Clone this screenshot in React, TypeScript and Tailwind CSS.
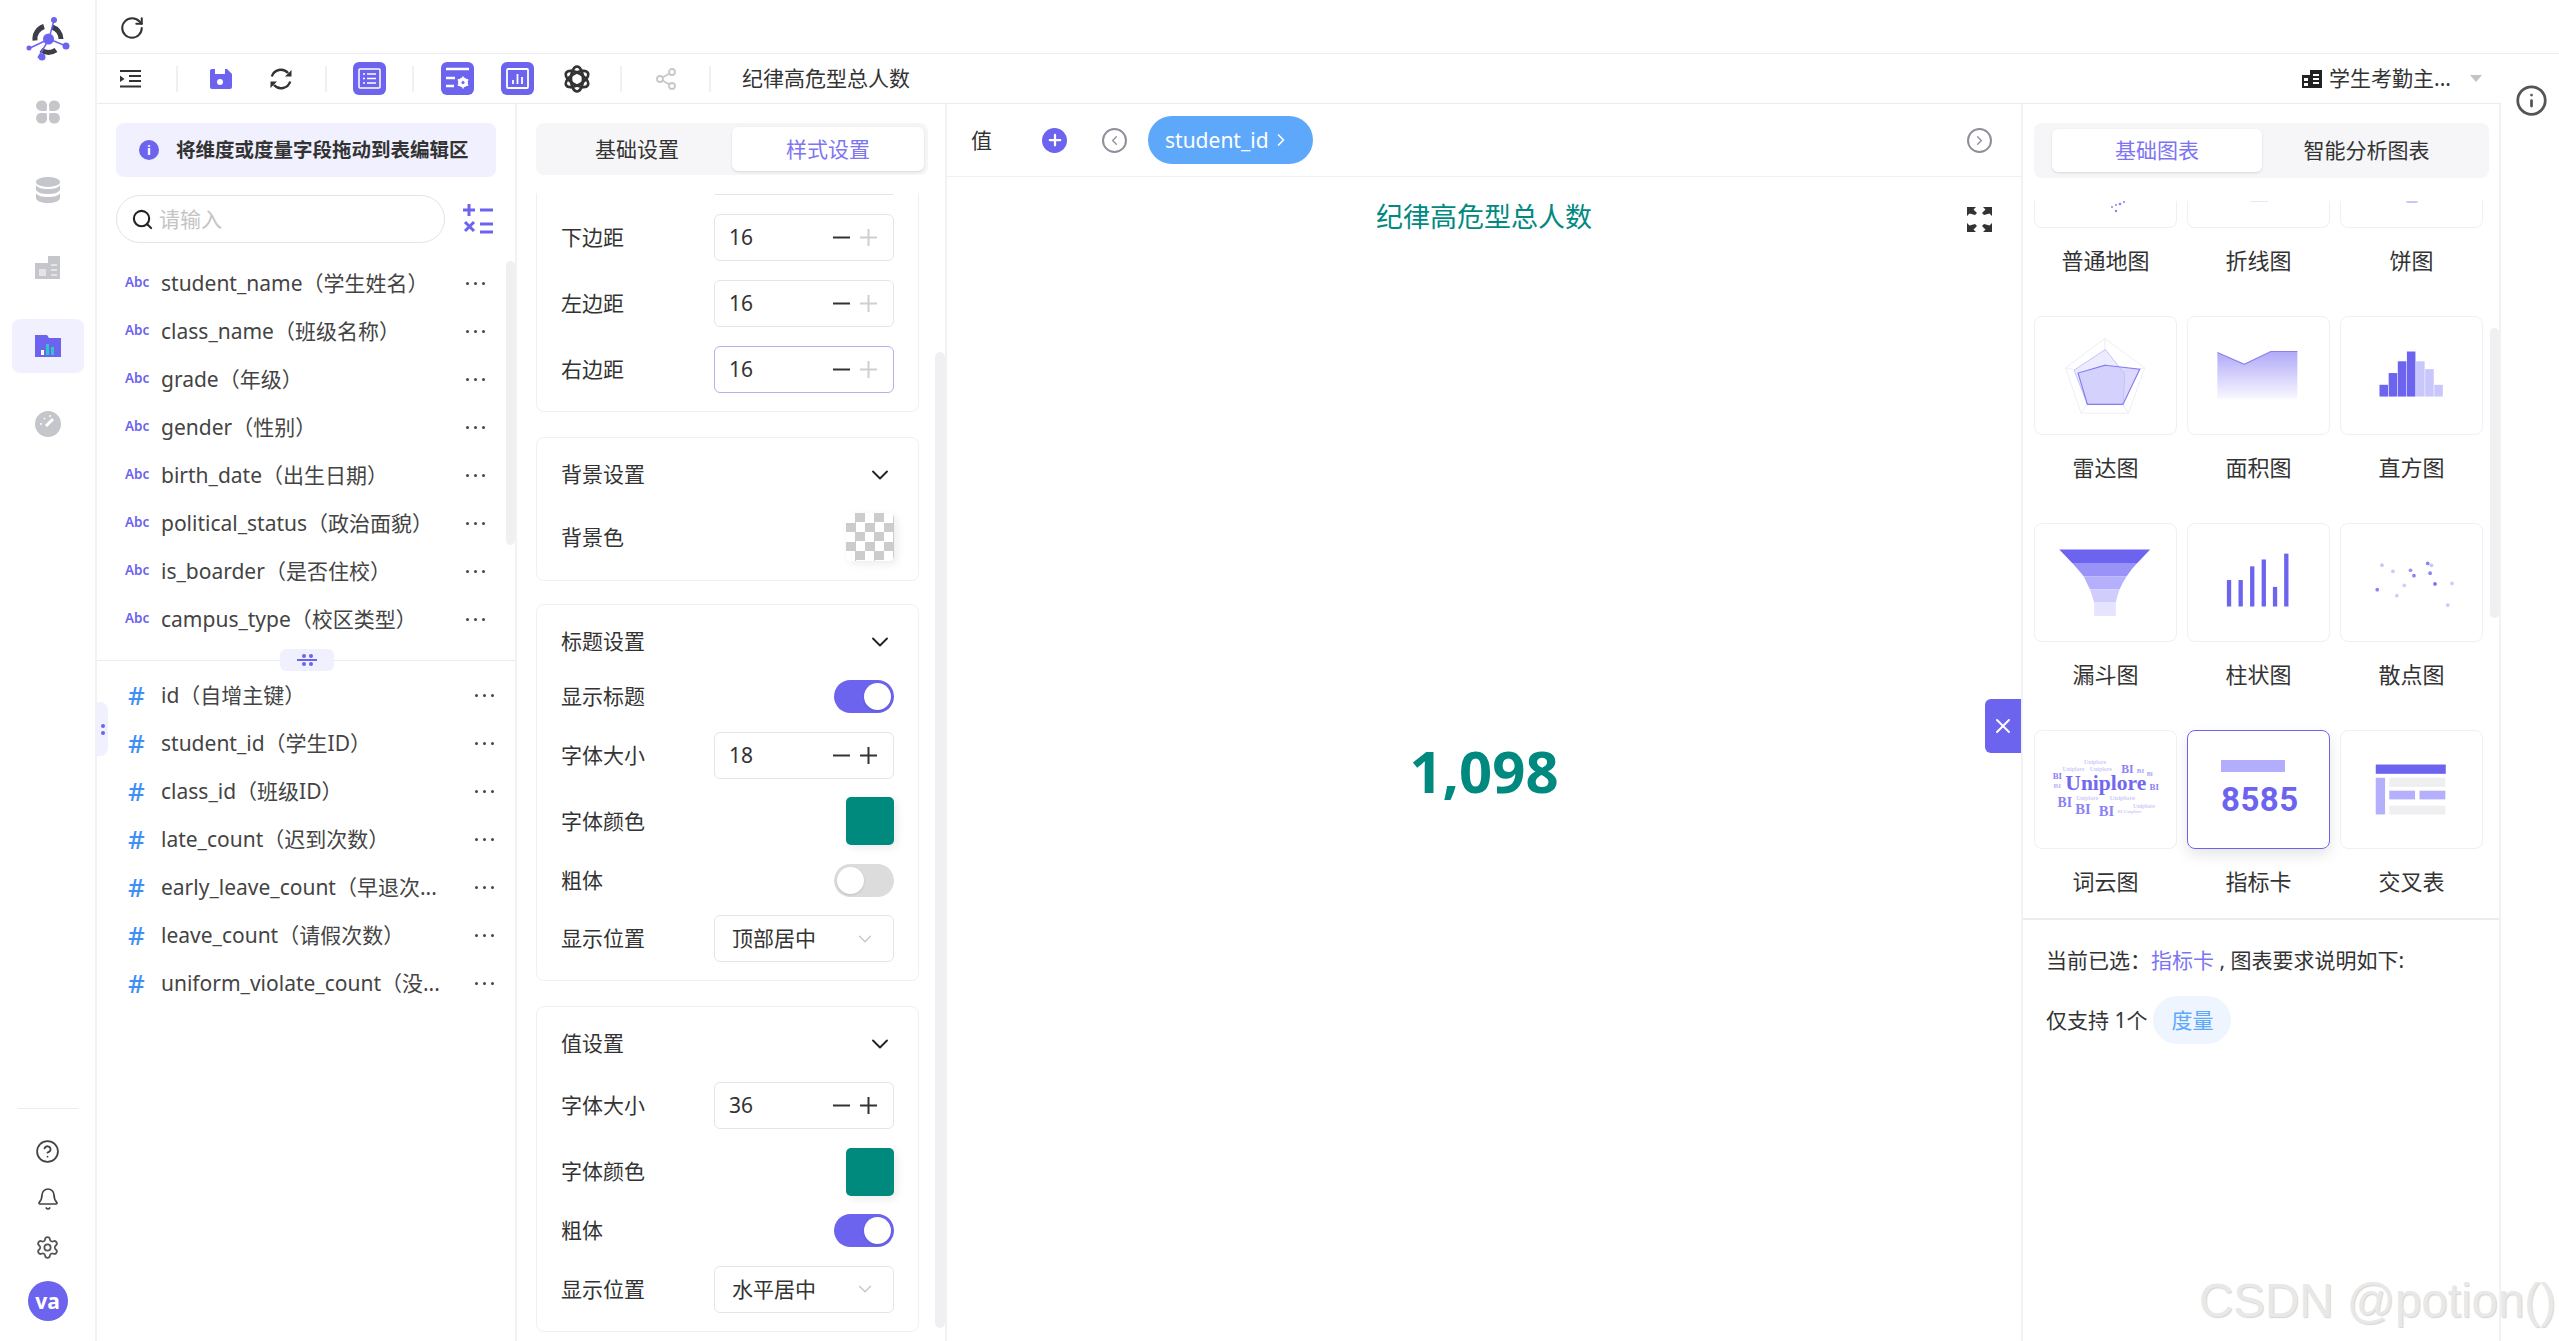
import { Bell, ChevronDown, ChevronLeft, ChevronRight, CircleHelp, Info, Plus, RotateCw, Search, Settings, Share2, X } from "lucide-react";

const dims = [
  "student_name（学生姓名）",
  "class_name（班级名称）",
  "grade（年级）",
  "gender（性别）",
  "birth_date（出生日期）",
  "political_status（政治面貌）",
  "is_boarder（是否住校）",
  "campus_type（校区类型）",
];

const measures = [
  "id（自增主键）",
  "student_id（学生ID）",
  "class_id（班级ID）",
  "late_count（迟到次数）",
  "early_leave_count（早退次...",
  "leave_count（请假次数）",
  "uniform_violate_count（没...",
];

function Dots() {
  return (
    <span className="flex items-center gap-[5px]">
      <span className="size-[3px] rounded-full bg-[#444]" />
      <span className="size-[3px] rounded-full bg-[#444]" />
      <span className="size-[3px] rounded-full bg-[#444]" />
    </span>
  );
}

function Logo() {
  return (
    <svg width="48" height="48" viewBox="0 0 48 48" fill="none">
      <path d="M37 24a13 13 0 0 0-9-12M20 11.500a13 13 0 0 0-9 14M17 35a13 13 0 0 0 15 0" stroke="#3d3d4a" strokeWidth="5" />
      <path d="M30 5l-5 19-11 19M25 24l17 7M25 24L6 33" stroke="#6c63ef" strokeWidth="1.500" />
      <circle cx="24.500" cy="24" r="5.500" fill="#6c63ef" />
      <circle cx="30" cy="5" r="3" fill="#6c63ef" />
      <circle cx="5" cy="33" r="2.500" fill="#6c63ef" />
      <circle cx="18" cy="42" r="3.500" fill="#6c63ef" />
      <circle cx="42" cy="31" r="3.500" fill="#6c63ef" />
    </svg>
  );
}

function RailIcon({ kind }: { kind: string }) {
  if (kind === "clover")
    return (
      <svg width="24" height="24" viewBox="0 0 24 24" fill="#c5c5cc">
        <path d="M0 6a5.500 5.500 0 0 1 5.500-5.500c3.500 0 5.500 2 5.500 5 0 3.500-.5 5.500-.5 5.500H5.500A5.500 5.500 0 0 1 0 6zM24 6a5.500 5.500 0 0 0-5.500-5.500c-3.500 0-5.500 2-5.500 5 0 3.500.5 5.500.5 5.500h5A5.500 5.500 0 0 0 24 6zM0 18a5 5 0 0 1 5.500-5h5s.5 2 .5 5.500c0 3-2 5-5.500 5A5.500 5.500 0 0 1 0 18zM24 18a5 5 0 0 0-5.500-5h-5s-.5 2-.5 5.500c0 3 2 5 5.500 5A5.500 5.500 0 0 0 24 18z" />
      </svg>
    );
  if (kind === "db")
    return (
      <svg width="24" height="26" viewBox="0 0 24 26" fill="#c5c5cc">
        <ellipse cx="12" cy="5" rx="12" ry="5" />
        <path d="M0 8c2 3 6 4 12 4s10-1 12-4v5c-2 3-6 4-12 4S2 16 0 13zM0 16c2 3 6 4 12 4s10-1 12-4v5c0 3-6 5-12 5S0 24 0 21z" />
      </svg>
    );
  if (kind === "board")
    return (
      <svg width="26" height="24" viewBox="0 0 26 24" fill="#c5c5cc">
        <path d="M0 7h13V0h12v23H0z" />
        <path d="M4 13h7v7H4zM16 8h6v2h-6zM16 13h6v2h-6zM16 18h6v2h-6z" fill="#e4e4e8" />
      </svg>
    );
  if (kind === "folder")
    return (
      <svg width="26" height="24" viewBox="0 0 26 24">
        <path d="M0 1h12l2 3h12v19H0z" fill="#6c63ef" />
        <path d="M6 16h3v5H6z" fill="#fff" />
        <path d="M16 13h3v8h-3zM11 10h3v11h-3z" fill="#2ec5c9" />
      </svg>
    );
  return (
    <svg width="26" height="26" viewBox="0 0 26 26" fill="none">
      <circle cx="13" cy="13" r="13" fill="#c5c5cc" />
      <path d="M11 15l7-7" stroke="#fff" strokeWidth="3" />
      <path d="M5 13h2M9 7l1 1M14 5h2" stroke="#fff" strokeWidth="1.500" />
    </svg>
  );
}

function Rail() {
  return (
    <div className="flex w-[97px] shrink-0 flex-col items-center border-r-2 border-[#f2f2f4]">
      <div className="flex h-[85px] items-start pt-[15px]">
        <Logo />
      </div>
      <div className="flex flex-col gap-[24px]">
        {["clover", "db", "board", "folder", "gauge"].map((k) => (
          <div key={k} className={`flex h-[54px] w-[72px] items-center justify-center rounded-lg ${k === "folder" ? "bg-[#f0f0fe]" : ""}`}>
            <RailIcon kind={k} />
          </div>
        ))}
      </div>
      <div className="mt-auto flex w-full flex-col items-center pb-[20px]">
        <div className="mb-[18px] h-px w-[60px] bg-[#ececec]" />
        <div className="flex h-[48px] items-center"><CircleHelp size={25} strokeWidth={1.7} className="text-[#444]" /></div>
        <div className="flex h-[48px] items-center"><Bell size={24} strokeWidth={1.7} className="text-[#444]" /></div>
        <div className="flex h-[48px] items-center"><Settings size={25} strokeWidth={1.7} className="text-[#555]" /></div>
        <div className="mt-[10px] flex size-[40px] items-center justify-center rounded-full bg-[#6c63ef] text-[21px] font-bold leading-none text-white">va</div>
      </div>
    </div>
  );
}

function ToolBtn({ kind, className }: { kind: string; className: string }) {
  return (
    <div className={`flex size-[33px] shrink-0 items-center justify-center rounded-[6px] bg-[#6c63ef] ${className}`}>
      {kind === "list" && (
        <svg width="23" height="21" viewBox="0 0 23 21" fill="none" stroke="#fff" strokeWidth="1.500">
          <rect x="1" y="1" width="21" height="19" rx="1" />
          <path d="M5 6h2M9 6h9M5 10.500h2M9 10.500h9M5 15h2M9 15h9" />
        </svg>
      )}
      {kind === "form" && (
        <svg width="25" height="23" viewBox="0 0 25 23" fill="none">
          <path d="M1 2h23M1 11h9M1 19h8" stroke="#fff" strokeWidth="2.500" />
          <circle cx="18" cy="15.500" r="3.500" stroke="#fff" strokeWidth="3" />
          <path d="M18 9.500v12M12.800 12.500l10.400 6M12.800 18.500l10.400-6" stroke="#fff" strokeWidth="1.500" />
          <circle cx="18" cy="15.500" r="1.500" fill="#6c63ef" />
        </svg>
      )}
      {kind === "chart" && (
        <svg width="23" height="21" viewBox="0 0 23 21" fill="none" stroke="#fff" strokeWidth="1.800">
          <rect x="1" y="1" width="21" height="19" rx="1" />
          <path d="M7 16v-4M11.500 16V6M16 16V9" />
        </svg>
      )}
    </div>
  );
}

function VLine({ className }: { className: string }) {
  return <span className={`h-[26px] w-[2px] shrink-0 bg-[#f0f0f2] ${className}`} />;
}

function Toolbar() {
  return (
    <div className="flex h-[50px] items-center border-b border-[#ececee] pl-[23px] pr-[19px]">
      <svg width="24" height="18" viewBox="0 0 24 18" fill="#333" className="shrink-0">
        <path d="M0 0h21v2H0zM9 5h12v2H9zM9 10h12v2H9zM0 15.500h21v2H0zM0 5.500l4.500 3.500L0 12z" />
      </svg>
      <VLine className="ml-[32px]" />
      <svg width="22" height="20" viewBox="0 0 22 20" className="ml-[32px] shrink-0">
        <path d="M2 0h15l5 5v13a2 2 0 0 1-2 2H2a2 2 0 0 1-2-2V2a2 2 0 0 1 2-2z" fill="#6c63ef" />
        <path d="M5 0h10v5H5z" fill="#fff" />
        <circle cx="10" cy="13" r="3" fill="#fff" />
      </svg>
      <svg width="24" height="24" viewBox="0 0 24 24" fill="none" className="ml-[37px] shrink-0">
        <path d="M2.800 9.500A9.500 9.500 0 0 1 19 6M21.200 14.500A9.500 9.500 0 0 1 5 18" stroke="#333" strokeWidth="2.400" />
        <path d="M22.500 3v6.500H16zM1.500 21v-6.500H8z" fill="#333" />
      </svg>
      <VLine className="ml-[32px]" />
      <ToolBtn kind="list" className="ml-[26px]" />
      <VLine className="ml-[26px]" />
      <ToolBtn kind="form" className="ml-[27px]" />
      <ToolBtn kind="chart" className="ml-[27px]" />
      <svg width="26" height="28" viewBox="0 0 26 28" fill="none" stroke="#333" strokeWidth="2.600" className="ml-[30px] shrink-0">
        <ellipse cx="13" cy="14" rx="6" ry="12.500" />
        <ellipse cx="13" cy="14" rx="6" ry="12.500" transform="rotate(60 13 14)" />
        <ellipse cx="13" cy="14" rx="6" ry="12.500" transform="rotate(120 13 14)" />
      </svg>
      <VLine className="ml-[30px]" />
      <Share2 size={24} strokeWidth={1.800} className="ml-[32px] shrink-0 text-[#c8c8c8]" />
      <VLine className="ml-[31px]" />
      <span className="ml-[31px] text-[21px] leading-none text-[#333]">纪律高危型总人数</span>
      <svg width="20" height="18" viewBox="0 0 20 18" fill="#222" className="ml-auto shrink-0">
        <path d="M0 5h8V0h12v18H0zM2 8v3h4V8zM2 13v3h4v-3zM11 4v2h6V4zM11 8v2h6V8zM11 12v2h6v-2z" fillRule="evenodd" />
      </svg>
      <span className="ml-[7px] text-[21px] leading-none text-[#333]">学生考勤主...</span>
      <span className="ml-[19px] size-0 border-x-[6px] border-t-[7px] border-x-transparent border-t-[#c4c4c4]" />
    </div>
  );
}

function FieldRow({ name, metric }: { name: string; metric?: boolean }) {
  return (
    <div className="flex h-[48px] items-center">
      {metric ? (
        <span className="ml-[31px] w-[33px] text-[26px] font-medium leading-none text-[#3f8ff7]">#</span>
      ) : (
        <span className="ml-[28px] w-[36px] text-[13.500px] font-semibold leading-none text-[#6c63ef]">Abc</span>
      )}
      <span className="whitespace-nowrap text-[21px] leading-none text-[#444]">{name}</span>
      <span className={`ml-auto ${metric ? "mr-[21px]" : "mr-[30px]"}`}>
        <Dots />
      </span>
    </div>
  );
}

function FieldPanel() {
  return (
    <div className="relative w-[420px] shrink-0 border-r-2 border-[#f2f2f4]">
      <div className="mx-[19px] mt-[19px] flex h-[54px] items-center rounded-lg bg-[#f0f0fe] pl-[23px] text-[19.500px] font-bold leading-none text-[#333]">
        <span className="mr-[17px] flex size-[20px] items-center justify-center rounded-full bg-[#6c63ef] text-[13px] font-bold text-white">i</span>
        将维度或度量字段拖动到表编辑区
      </div>
      <div className="ml-[19px] mt-[18px] flex items-center">
        <div className="flex h-[48px] w-[329px] items-center rounded-full border border-[#e4e4e6] pl-[14px]">
          <Search size={23} strokeWidth={2.200} className="text-[#222]" />
          <span className="ml-[5px] text-[21px] leading-none text-[#c4c4c4]">请输入</span>
        </div>
        <svg width="30" height="30" viewBox="0 0 30 30" stroke="#6c63ef" strokeWidth="3" className="ml-[18px]">
          <path d="M0 6h12M6 0v12M17 6h13M2 18l9 9M11 18l-9 9M17 20h13M17 28h13" />
        </svg>
      </div>
      <div className="mt-[16px]">
        {dims.map((d) => (
          <FieldRow key={d} name={d} />
        ))}
      </div>
      <div className="relative mt-[17px] h-px bg-[#ececee]">
        <div className="absolute left-[183px] top-[-11px] flex h-[22px] w-[54px] flex-col items-center justify-center gap-[1px] rounded-md bg-[#f0f0fe]">
          <span className="flex gap-[3px]"><i className="size-[4px] rounded-full bg-[#6c63ef]" /><i className="size-[4px] rounded-full bg-[#6c63ef]" /></span>
          <span className="h-[2px] w-[20px] bg-[#6c63ef]" />
          <span className="flex gap-[3px]"><i className="size-[4px] rounded-full bg-[#6c63ef]" /><i className="size-[4px] rounded-full bg-[#6c63ef]" /></span>
        </div>
      </div>
      <div className="mt-[10px]">
        {measures.map((d) => (
          <FieldRow key={d} name={d} metric />
        ))}
      </div>
      <div className="absolute left-0 top-[598px] flex h-[54px] w-[11px] flex-col items-center justify-center gap-[3px] rounded-r-lg bg-[#f0f0fe]">
        <i className="size-[4px] rounded-full bg-[#6c63ef]" />
        <i className="size-[4px] rounded-full bg-[#6c63ef]" />
      </div>
      <div className="absolute right-0 top-[157px] h-[284px] w-[9px] rounded-md bg-[#f0f0f3]" />
    </div>
  );
}

function Stepper({ value, active, plusOff }: { value: string; active?: boolean; plusOff?: boolean }) {
  return (
    <div className={`flex h-[47px] w-[180px] items-center rounded-[6px] border pl-[14px] pr-[16px] text-[21px] leading-none text-[#333] ${active ? "border-[#b8b0ec]" : "border-[#e5e5e8]"}`}>
      {value}
      <svg width="44" height="17" viewBox="0 0 44 17" className="ml-auto" strokeWidth="2">
        <path d="M0 8.500h17" stroke="#333" />
        <path d="M27 8.500h17M35.500 0v17" stroke={plusOff ? "#cfcfcf" : "#333"} />
      </svg>
    </div>
  );
}

function SelectBox({ value }: { value: string }) {
  return (
    <div className="flex h-[47px] w-[180px] items-center rounded-[6px] border border-[#e5e5e8] pl-[17px] pr-[17px] text-[21px] leading-none text-[#333]">
      {value}
      <ChevronDown size={22} strokeWidth={1.300} className="ml-auto text-[#c4c4c4]" />
    </div>
  );
}

function Toggle({ on }: { on?: boolean }) {
  return (
    <div className={`flex h-[33px] w-[60px] items-center rounded-full px-[3px] ${on ? "justify-end bg-[#6c63ef]" : "justify-start bg-[#dcdcdc]"}`}>
      <span className="size-[27px] rounded-full bg-white shadow" />
    </div>
  );
}

function Swatch({ color }: { color: string }) {
  return <div className={`size-[48px] rounded-[5px] shadow-[3px_3px_8px_rgba(0,0,0,0.08)] ${color}`} />;
}

function Row({ label, children }: { label: string; children: React.ReactNode }) {
  return (
    <div className="flex items-center justify-between text-[21px] leading-none text-[#333]">
      <span>{label}</span>
      {children}
    </div>
  );
}

function CardHead({ title }: { title: string }) {
  return (
    <div className="flex h-[75px] items-center justify-between pb-[2px] text-[21px] leading-none text-[#333]">
      {title}
      <ChevronDown size={28} strokeWidth={1.600} className="text-[#222]" />
    </div>
  );
}

function Card({ title, children, className }: { title: string; children: React.ReactNode; className?: string }) {
  return (
    <div className={`rounded-[8px] border border-[#f0f0f2] px-[24px] pb-[18px] ${className}`}>
      <CardHead title={title} />
      <div className="flex flex-col gap-[18.500px]">{children}</div>
    </div>
  );
}

function ConfigPanel() {
  return (
    <div className="relative w-[430px] shrink-0 border-r-2 border-[#f2f2f4] pl-[19px]">
      <div className="mt-[19px] flex h-[52px] w-[392px] items-center justify-end rounded-lg bg-[#f6f6f8] pr-[4px] text-[21px] leading-none">
        <span className="flex-1 pl-[6px] text-center text-[#333]">基础设置</span>
        <span className="flex h-[44px] w-[192px] items-center justify-center rounded-md bg-white text-[#7d74f2] shadow-sm">样式设置</span>
      </div>
      <div className="mt-[18px] w-[383px]">
        <div className="rounded-b-[8px] border-x border-b border-[#f0f0f2] px-[24px] pb-[18px]">
          <div className="ml-auto h-[2px] w-[180px] rounded-b border-b border-[#e5e5e8]" />
          <div className="mt-[19px] flex flex-col gap-[19px]">
            <Row label="下边距"><Stepper value="16" plusOff /></Row>
            <Row label="左边距"><Stepper value="16" plusOff /></Row>
            <Row label="右边距"><Stepper value="16" plusOff active /></Row>
          </div>
        </div>
        <div className="mt-[25px] rounded-[8px] border border-[#f0f0f2] px-[24px] pb-[19px]">
          <CardHead title="背景设置" />
          <Row label="背景色">
            <div className="size-[48px] rounded-[5px] bg-[repeating-conic-gradient(#cccccc_0_25%,#ffffff_0_50%)] bg-[length:19px_19px] shadow-[3px_3px_8px_rgba(0,0,0,0.08)]" />
          </Row>
        </div>
        <Card title="标题设置" className="mt-[23px]">
          <Row label="显示标题"><Toggle on /></Row>
          <Row label="字体大小"><Stepper value="18" /></Row>
          <Row label="字体颜色"><Swatch color="bg-[#008a7e]" /></Row>
          <Row label="粗体"><Toggle /></Row>
          <Row label="显示位置"><SelectBox value="顶部居中" /></Row>
        </Card>
        <Card title="值设置" className="mt-[25px]">
          <Row label="字体大小"><Stepper value="36" /></Row>
          <Row label="字体颜色"><Swatch color="bg-[#008a7e]" /></Row>
          <Row label="粗体"><Toggle on /></Row>
          <Row label="显示位置"><SelectBox value="水平居中" /></Row>
        </Card>
      </div>
      <div className="absolute right-0 top-[248px] h-[976px] w-[10px] rounded-md bg-[#f0f0f3]" />
    </div>
  );
}

function Canvas() {
  return (
    <div className="relative flex min-w-0 flex-1 flex-col">
      <div className="flex h-[73px] items-center border-b border-[#f0f0f2] pl-[24px] pr-[29px]">
        <span className="text-[21px] leading-none text-[#333]">值</span>
        <span className="ml-[50px] flex size-[25px] items-center justify-center rounded-full bg-[#6c63ef]">
          <Plus size={18} strokeWidth={3} className="text-white" />
        </span>
        <span className="ml-[35px] flex size-[25px] items-center justify-center rounded-full border-2 border-[#8f8f9c]">
          <ChevronLeft size={15} strokeWidth={2} className="text-[#8f8f9c]" />
        </span>
        <span className="ml-[21px] flex h-[48px] w-[165px] items-center gap-[2px] rounded-full bg-[#5ea8fc] pl-[17px] text-[21px] leading-none text-white">
          student_id
          <ChevronRight size={20} strokeWidth={2} />
        </span>
        <span className="ml-auto flex size-[25px] items-center justify-center rounded-full border-2 border-[#8f8f9c]">
          <ChevronRight size={15} strokeWidth={2} className="text-[#8f8f9c]" />
        </span>
      </div>
      <div className="flex h-[76px] items-center justify-center pt-[3px] text-[27px] leading-none text-[#00897f]">纪律高危型总人数</div>
      <div className="flex flex-1 items-center justify-center pb-[52px] text-[58px] font-bold leading-none text-[#00897f]">1,098</div>
      <svg width="25" height="25" viewBox="0 0 25 25" fill="#333" className="absolute right-[29px] top-[103px]">
        <path d="M0 0h9L6.500 2.500 10 6 8 8 2.500 6.500 0 9zM25 0h-9l2.500 2.500L15 6l2 2 5.500-1.500L25 9zM0 25h9l-2.500-2.500L10 19l-2-2-5.500 1.500L0 16zM25 25h-9l2.500-2.500L15 19l2-2 5.500 1.500L25 16z" />
      </svg>
      <div className="absolute right-0 top-[595px] flex h-[54px] w-[36px] items-center justify-center rounded-l-md bg-[#6c63ef]">
        <X size={24} strokeWidth={2} className="text-white" />
      </div>
    </div>
  );
}

function Thumb({ name }: { name: string }) {
  if (name === "radar")
    return (
      <svg viewBox="0 0 144 119" className="size-full" fill="none">
        <path d="M71.400 21.700L112 51.700 95.500 98H47L31.300 51.700z" stroke="#eeeef4" />
        <path d="M71.400 60V21.700M71.400 60L112 51.700M71.400 60L95.500 98M71.400 60L47 98M71.400 60L31.300 51.700" stroke="#e4e3f7" strokeWidth="0.700" />
        <path d="M71.800 33L91.700 58 89.800 89H53.500L40 54z" fill="#e6e4fd" fillOpacity="0.7" stroke="#c4c0fa" />
        <path d="M71.800 49L107 53 89.800 89H53.500L44 57z" fill="#c4c0fb" fillOpacity="0.6" stroke="#847bf3" strokeWidth="1.200" />
      </svg>
    );
  if (name === "area")
    return (
      <svg viewBox="0 0 144 119" className="size-full" fill="none">
        <defs>
          <linearGradient id="areaFill" x1="0" y1="0" x2="0" y2="1">
            <stop offset="0" stopColor="#b0a9f7" />
            <stop offset="1" stopColor="#f8f7ff" />
          </linearGradient>
        </defs>
        <path d="M30 36L57.500 48 84.500 35H111.700V83H30z" fill="url(#areaFill)" />
        <path d="M30 36L57.500 48 84.500 35H111.700" stroke="#8c80f0" strokeWidth="1.200" />
      </svg>
    );
  if (name === "hist")
    return (
      <svg viewBox="0 0 144 119" className="size-full">
        <g fill="#6c63ef">
          <rect x="39.300" y="69" width="8.700" height="12" />
          <rect x="48.700" y="57" width="8.700" height="24" />
          <rect x="58" y="45" width="8.700" height="36" />
          <rect x="67.300" y="35" width="8.700" height="46" />
        </g>
        <g fill="#c9c6fc">
          <rect x="76.700" y="45" width="8.700" height="36" />
          <rect x="86" y="53" width="8.700" height="28" />
          <rect x="95.300" y="69" width="8.700" height="12" />
        </g>
      </svg>
    );
  if (name === "funnel")
    return (
      <svg viewBox="0 0 144 119" className="size-full">
        <path d="M24.800 25.700H117.600L104.500 39.500H38z" fill="#6c63ef" />
        <path d="M38 39.500H104.500Q98 46 93.600 53H49.700Q44 46 38 39.500z" fill="#9a93f7" />
        <path d="M49.700 53H93.600Q89 60 86.500 66.500H56Q53 60 49.700 53z" fill="#b5b0fb" />
        <path d="M56 66.500H86.500Q84 73 82.500 80H60.400Q58.500 73 56 66.500z" fill="#d0cdfd" />
        <path d="M60.400 80H82.500V93.600H60.400z" fill="#e5e3fe" />
      </svg>
    );
  if (name === "bars")
    return (
      <svg viewBox="0 0 144 119" className="size-full" fill="#6c63ef">
        <rect x="39.700" y="57" width="4.400" height="27" />
        <rect x="51.600" y="57" width="4.400" height="27" />
        <rect x="63.400" y="43" width="4.400" height="41" />
        <rect x="75.200" y="36" width="4.400" height="48" />
        <rect x="86.700" y="64" width="4.400" height="20" />
        <rect x="98.200" y="30" width="4.400" height="54" />
      </svg>
    );
  if (name === "scatter") {
    const pts = [
      [41.8, 41.8, "#c9c6fc"], [53, 48, "#c9c6fc"], [71, 47, "#9a93f7"], [74.5, 52.5, "#8a82f5"],
      [88.6, 40, "#8a82f5"], [92.4, 42, "#c9c6fc"], [91, 50, "#8a82f5"], [96, 61, "#7d74f2"],
      [113.4, 60.4, "#d0cdfd"], [64.6, 62.5, "#d0cdfd"], [37, 66.8, "#8a82f5"], [57, 73, "#d0cdfd"], [109, 82.5, "#c9c6fc"],
    ] as const;
    return (
      <svg viewBox="0 0 144 119" className="size-full">
        {pts.map(([x, y, c]) => (
          <circle key={`${x}-${y}`} cx={x} cy={y} r="1.900" fill={c} />
        ))}
      </svg>
    );
  }
  if (name === "cloud")
    return (
      <svg viewBox="0 0 144 119" className="size-full" fontFamily="Liberation Serif, serif" fontWeight="700">
        <g fill="#cfccfb" fontSize="7">
          <text x="50" y="33" fontSize="6">Uniplore</text>
          <text x="28" y="41" fontSize="6">Uniplore</text>
          <text x="56" y="41" fontSize="6">Uniplore</text>
          <text x="42" y="70" fontSize="6">Uniplore</text>
          <text x="76" y="70" fontSize="7">Uniplore</text>
          <text x="100" y="78" fontSize="6">Uniplore</text>
          <text x="84" y="84" fontSize="5">BI Uniplore</text>
        </g>
        <g fill="#8a82f5">
          <text x="31" y="60" fontSize="22" fill="#7268f0">Uniplore</text>
          <text x="88" y="43" fontSize="12">BI</text>
          <text x="104" y="43" fontSize="7" fill="#a9a4f8">BI</text>
          <text x="114" y="46" fontSize="6" fill="#a9a4f8">BI</text>
          <text x="117" y="60" fontSize="9">BI</text>
          <text x="18" y="49" fontSize="9">BI</text>
          <text x="19" y="58" fontSize="7" fill="#b5b0fb">BI</text>
          <text x="23" y="77" fontSize="14">BI</text>
          <text x="41" y="85" fontSize="15">BI</text>
          <text x="65" y="87" fontSize="15">BI</text>
        </g>
      </svg>
    );
  if (name === "kpi")
    return (
      <div className="flex size-full flex-col pl-[33px] pt-[29px]">
        <div className="h-[12px] w-[64px] bg-[#b3aefb]" />
        <div className="mt-[11px] text-[33px] font-bold leading-none tracking-[0.5px] text-[#6c63ef] [font-family:Roboto,sans-serif]">8585</div>
      </div>
    );
  return (
    <svg viewBox="0 0 144 119" className="size-full">
      <rect x="35.500" y="34" width="71.500" height="9.500" fill="#6c63ef" />
      <rect x="35.500" y="47.500" width="9.500" height="37.500" fill="#b5b0fb" />
      <rect x="49.300" y="47.500" width="57.300" height="9.300" fill="#efeff1" />
      <rect x="49.300" y="60.700" width="26.300" height="8.900" fill="#b5b0fb" />
      <rect x="80.200" y="60.700" width="26.400" height="8.900" fill="#b5b0fb" />
      <rect x="49.300" y="76" width="57.300" height="9" fill="#efeff1" />
    </svg>
  );
}

const charts = [
  ["radar", "雷达图"], ["area", "面积图"], ["hist", "直方图"],
  ["funnel", "漏斗图"], ["bars", "柱状图"], ["scatter", "散点图"],
  ["cloud", "词云图"], ["kpi", "指标卡"], ["table", "交叉表"],
];

function ChartLabel({ text }: { text: string }) {
  return <div className="flex h-[88px] items-start justify-center pt-[20px] text-[22px] leading-[24px] text-[#333]">{text}</div>;
}

function ChartPanel() {
  return (
    <div className="relative w-[480px] shrink-0 border-x-2 border-[#f2f2f4]">
      <div className="ml-[11px] mt-[19px] flex h-[55px] w-[455px] items-center rounded-lg bg-[#f6f6f8] pl-[18px] text-[21px] leading-none">
        <span className="flex h-[43px] w-[210px] items-center justify-center rounded-md bg-white text-[#7d74f2] shadow-sm">基础图表</span>
        <span className="flex-1 pr-[18px] text-center text-[#333]">智能分析图表</span>
      </div>
      <div className="ml-[11px] mt-[23px] h-[717px] w-[449px] overflow-hidden">
        <div className="grid grid-cols-3 gap-x-[10px]">
          {[
            ["普通地图", "map"],
            ["折线图", "line"],
            ["饼图", "pie"],
          ].map(([t, k]) => (
            <div key={k}>
              <div className="flex h-[27px] justify-center rounded-b-[8px] border-x border-b border-[#f0f0f2]">
                {k === "map" && (
                  <svg width="16" height="12" viewBox="0 0 16 12" fill="#8a82f5" className="ml-[24px]">
                    <circle cx="2" cy="6" r="1" /><circle cx="6" cy="4" r="1" /><circle cx="10" cy="3" r="1.300" /><circle cx="14" cy="1" r="1" /><circle cx="6" cy="10" r="1.200" />
                  </svg>
                )}
                {k === "line" && <span className="h-px w-[18px] bg-[#e8e6fc]" />}
                {k === "pie" && <span className="h-[2px] w-[12px] rounded-b bg-[#c9c6fc]" />}
              </div>
              <ChartLabel text={t} />
            </div>
          ))}
          {charts.map(([k, t]) => (
            <div key={k}>
              <div className={`h-[119px] rounded-[8px] border ${k === "kpi" ? "border-[#6c63ef] shadow-[0_6px_14px_rgba(0,0,0,0.1)]" : "border-[#f0f0f2]"}`}>
                <Thumb name={k} />
              </div>
              <ChartLabel text={t} />
            </div>
          ))}
        </div>
      </div>
      <div className="border-t-2 border-[#ececee] pl-[23px] text-[21px] leading-none text-[#333]">
        <div className="mt-[30px]">
          当前已选：<span className="text-[#7d74f2]">指标卡</span> , 图表要求说明如下:
        </div>
        <div className="mt-[25px] flex items-center">
          仅支持 1个
          <span className="ml-[6px] flex h-[48px] w-[78px] items-center justify-center rounded-full bg-[#eef5ff] text-[#5ea8fc]">度量</span>
        </div>
      </div>
      <div className="absolute right-0 top-[224px] h-[290px] w-[9px] rounded-md bg-[#f0f0f3]" />
    </div>
  );
}

export default function App() {
  return (
    <div className="relative flex h-[1341px] w-[2559px] overflow-hidden bg-white [font-family:'Noto_Sans','Noto_Sans_CJK_SC',sans-serif]">
      <Rail />
      <div className="flex min-w-0 flex-1 flex-col">
        <div className="flex h-[54px] shrink-0 items-center border-b border-[#ececee] pl-[22px] pt-[2px]">
          <RotateCw size={26} strokeWidth={1.900} className="text-[#333]" />
        </div>
        <div className="flex min-h-0 flex-1">
          <div className="flex min-w-0 flex-1 flex-col">
            <Toolbar />
            <div className="flex min-h-0 flex-1">
              <FieldPanel />
              <ConfigPanel />
              <Canvas />
              <ChartPanel />
            </div>
          </div>
          <div className="flex w-[58px] shrink-0 justify-center pt-[30px] pl-[2px]">
            <Info size={33} strokeWidth={2} className="text-[#555]" />
          </div>
        </div>
      </div>
      <div className="pointer-events-none absolute bottom-[17px] right-[3px] text-[47.500px] leading-none text-[#e8e8e8] [font-family:'Liberation_Sans',sans-serif] [text-shadow:1px_1px_1px_#d4d4d4]">CSDN @potion()</div>
    </div>
  );
}
